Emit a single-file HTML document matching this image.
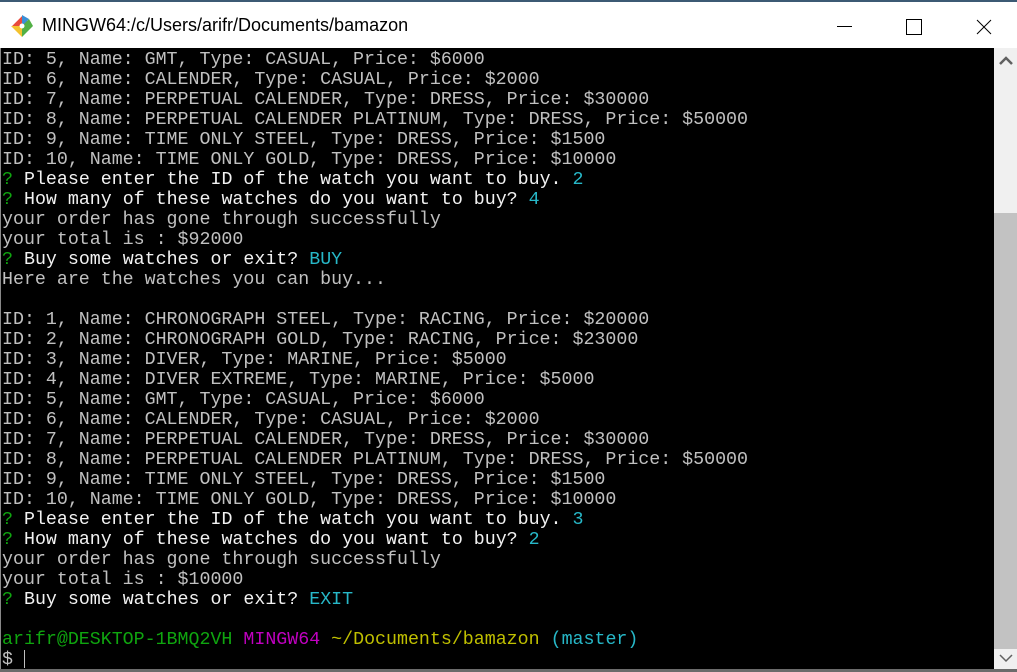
<!DOCTYPE html>
<html><head><meta charset="utf-8"><style>
html,body{margin:0;padding:0;width:1017px;height:672px;overflow:hidden;background:#000}
#tb{position:absolute;left:0;top:0;width:1017px;height:48px;background:#fff;border-top:2px solid #3c5a74;box-sizing:border-box}
#title{position:absolute;left:42px;top:13px;font:18px "Liberation Sans",sans-serif;color:#000}
#term{position:absolute;left:0;top:48px;width:993px;height:624px;background:#000;border-left:1px solid #888;box-sizing:border-box}
pre{margin:0;position:absolute;left:1px;top:2px;font:18.3px/20px "Liberation Mono",monospace;color:#c0c0c0;white-space:pre}
.w{color:#f2f2f2}.g{color:#0fa50f}.c{color:#27b8c8}.m{color:#c000c0}.y{color:#bfbf00}
#sb{position:absolute;left:994px;top:48px;width:23px;height:622px;background:#f0f0f0}
#th{position:absolute;left:994px;top:213px;width:23px;height:436px;background:#c2c2c2}
#bot{position:absolute;left:0;top:669px;width:1017px;height:3px;background:#6b6b6b}
</style></head><body>
<div id="tb">
<svg style="position:absolute;left:11px;top:13px" width="22" height="22" viewBox="0 0 22 22">
<rect x="4" y="4" width="14" height="14" transform="rotate(45 11 11)" fill="#e84a3c"/>
<polygon points="11,11 18,4 22,11 11,22" fill="#52b045"/>
<polygon points="0,11 11,11 11,22" fill="#f3c22e"/>
<polygon points="11,0 18,4 11,11" fill="#3a8fd6"/>
<circle cx="11" cy="11" r="2.5" fill="#fff"/>
</svg>
<div id="title">MINGW64:/c/Users/arifr/Documents/bamazon</div>
<div style="position:absolute;left:837px;top:24px;width:15px;height:1px;background:#000"></div>
<div style="position:absolute;left:906px;top:17px;width:14px;height:14px;border:1px solid #000"></div>
<svg style="position:absolute;left:976px;top:17px" width="16" height="16"><path d="M1 1L15 15M15 1L1 15" stroke="#000" stroke-width="1"/></svg>
</div>
<div id="term"><pre>ID: 5, Name: GMT, Type: CASUAL, Price: $6000
ID: 6, Name: CALENDER, Type: CASUAL, Price: $2000
ID: 7, Name: PERPETUAL CALENDER, Type: DRESS, Price: $30000
ID: 8, Name: PERPETUAL CALENDER PLATINUM, Type: DRESS, Price: $50000
ID: 9, Name: TIME ONLY STEEL, Type: DRESS, Price: $1500
ID: 10, Name: TIME ONLY GOLD, Type: DRESS, Price: $10000
<span class="g">?</span> <span class="w">Please enter the ID of the watch you want to buy.</span> <span class="c">2</span>
<span class="g">?</span> <span class="w">How many of these watches do you want to buy?</span> <span class="c">4</span>
your order has gone through successfully
your total is : $92000
<span class="g">?</span> <span class="w">Buy some watches or exit?</span> <span class="c">BUY</span>
Here are the watches you can buy...

ID: 1, Name: CHRONOGRAPH STEEL, Type: RACING, Price: $20000
ID: 2, Name: CHRONOGRAPH GOLD, Type: RACING, Price: $23000
ID: 3, Name: DIVER, Type: MARINE, Price: $5000
ID: 4, Name: DIVER EXTREME, Type: MARINE, Price: $5000
ID: 5, Name: GMT, Type: CASUAL, Price: $6000
ID: 6, Name: CALENDER, Type: CASUAL, Price: $2000
ID: 7, Name: PERPETUAL CALENDER, Type: DRESS, Price: $30000
ID: 8, Name: PERPETUAL CALENDER PLATINUM, Type: DRESS, Price: $50000
ID: 9, Name: TIME ONLY STEEL, Type: DRESS, Price: $1500
ID: 10, Name: TIME ONLY GOLD, Type: DRESS, Price: $10000
<span class="g">?</span> <span class="w">Please enter the ID of the watch you want to buy.</span> <span class="c">3</span>
<span class="g">?</span> <span class="w">How many of these watches do you want to buy?</span> <span class="c">2</span>
your order has gone through successfully
your total is : $10000
<span class="g">?</span> <span class="w">Buy some watches or exit?</span> <span class="c">EXIT</span>

<span class="g">arifr@DESKTOP-1BMQ2VH</span> <span class="m">MINGW64</span> <span class="y">~/Documents/bamazon</span> <span class="c">(master)</span>
$ <span style="display:inline-block;width:1px;height:18px;background:#c0c0c0;vertical-align:-4px"></span></pre></div>
<div id="sb"></div>
<div id="th"></div>
<svg style="position:absolute;left:999px;top:56px" width="14" height="10"><path d="M1 8L7 2L13 8" stroke="#606060" stroke-width="2.5" fill="none"/></svg>
<svg style="position:absolute;left:999px;top:653px" width="14" height="10"><path d="M1 2L7 8L13 2" stroke="#606060" stroke-width="1.5" fill="none"/></svg>
<div id="bot"></div>
</body></html>
